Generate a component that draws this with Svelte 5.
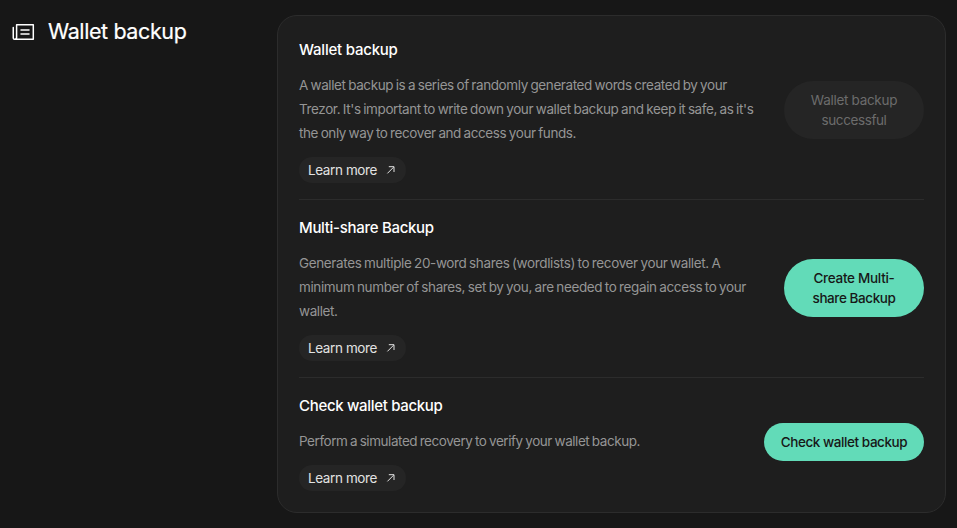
<script>
    // each line is [text, tracking in px]
    const items = [
        {
            title: ['Wallet backup', -0.22],
            text: [
                ['A wallet backup is a series of randomly generated words created by your', -0.4],
                ["Trezor. It's important to write down your wallet backup and keep it safe, as it's", -0.395],
                ['the only way to recover and access your funds.', -0.409],
            ],
            button: [['Wallet backup', -0.3], ['successful', -0.4]],
            disabled: true,
        },
        {
            title: ['Multi-share Backup', -0.3],
            text: [
                ['Generates multiple 20-word shares (wordlists) to recover your wallet. A', -0.369],
                ['minimum number of shares, set by you, are needed to regain access to your', -0.375],
                ['wallet.', -0.4],
            ],
            button: [['Create Multi-', -0.3], ['share Backup', -0.42]],
        },
        {
            title: ['Check wallet backup', -0.32],
            text: [['Perform a simulated recovery to verify your wallet backup.', -0.445]],
            button: [['Check wallet backup', -0.43]],
        },
    ]
</script>

<main>
    <header>
        <svg width="24" height="20" viewBox="0 0 24 20">
            <path d="M4.6 2.75H21.3V17.25H2.6C1.8 17.25 1.25 16.7 1.25 15.9V5.6M4.6 2.75V15.4C4.6 16.5 3.8 17.25 2.7 17.25" />
            <path d="M9 8H17M9 12H17" />
        </svg>
        <h2>Wallet backup</h2>
    </header>

    <section class="card">
        {#each items as item}
            <div class="row">
                <div class="info">
                    <h3 style:letter-spacing="{item.title[1]}px">{item.title[0]}</h3>
                    <p>
                        {#each item.text as [line, tracking]}
                            <span style:letter-spacing="{tracking}px">{line}</span>
                        {/each}
                    </p>
                    <button class="more">
                        Learn more
                        <svg width="10" height="10" viewBox="0 0 10 10">
                            <path d="M1.4 8.4L7.6 2.2M2.8 1.7H8V7" />
                        </svg>
                    </button>
                </div>
                <button class="action" class:wide={item.button.length === 1} disabled={item.disabled}>
                    {#each item.button as [line, tracking]}
                        <span style:letter-spacing="{tracking}px">{line}</span>
                    {/each}
                </button>
            </div>
        {/each}
    </section>
</main>

<style>
    :global(body) {
        margin: 0;
        background-color: #171717;
    }
    main {
        box-sizing: border-box;
        height: 528px;
        padding: 15px 11px 0 12px;
        display: flex;
        justify-content: space-between;
        align-items: flex-start;
        overflow: hidden;
        font-family: Inter, "Liberation Sans", sans-serif;
        color: #fff;
    }
    header {
        display: flex;
        align-items: center;
        gap: 12px;
        height: 34px;
    }
    h2, h3, p {
        margin: 0;
    }
    h2 {
        font-size: 21.5px;
        font-weight: 400;
        line-height: 32px;
        letter-spacing: -.4px;
        padding-bottom: 2px;
        -webkit-text-stroke: .2px currentColor;
    }
    svg {
        fill: none;
        stroke: currentColor;
    }
    header svg {
        stroke-width: 1.5;
        stroke-linejoin: round;
        stroke-linecap: round;
    }
    .card {
        box-sizing: border-box;
        width: 669px;
        height: 498px;
        padding: 6px 21px 0;
        border: 1px solid #2c2c2c;
        border-radius: 20px;
        background-color: #1e1e1e;
    }
    .row {
        display: flex;
        justify-content: space-between;
        align-items: center;
        padding: 16px 0;
    }
    .row + .row {
        border-top: 1px solid #2c2c2c;
    }
    h3 {
        font-size: 15px;
        font-weight: 500;
        line-height: 24px;
        margin-bottom: 11px;
    }
    p {
        font-size: 13.5px;
        line-height: 24px;
        word-spacing: -.8px;
        color: #959595;
        margin-bottom: 12px;
    }
    p span {
        display: block;
        white-space: nowrap;
    }
    button {
        margin: 0;
        border: 0;
        font-family: inherit;
        font-size: 13.5px;
    }
    .more {
        display: flex;
        align-items: center;
        gap: 9px;
        width: 107px;
        height: 26px;
        padding: 0 0 0 9px;
        border-radius: 13px;
        background-color: #252525;
        color: #e2e2e2;
        letter-spacing: -.4px;
        white-space: nowrap;
    }
    .action {
        box-sizing: border-box;
        flex: none;
        width: 140px;
        margin-bottom: 1px;
        padding: 9px 0;
        border-radius: 29px;
        background-color: #62dbb8;
        color: #171717;
        font-weight: 500;
        line-height: 20px;
    }
    .action.wide {
        width: 160px;
    }
    .action:disabled {
        background-color: #252525;
        color: #6c6c6c;
        font-weight: 400;
    }
    .action span {
        display: block;
        white-space: nowrap;
    }
</style>
